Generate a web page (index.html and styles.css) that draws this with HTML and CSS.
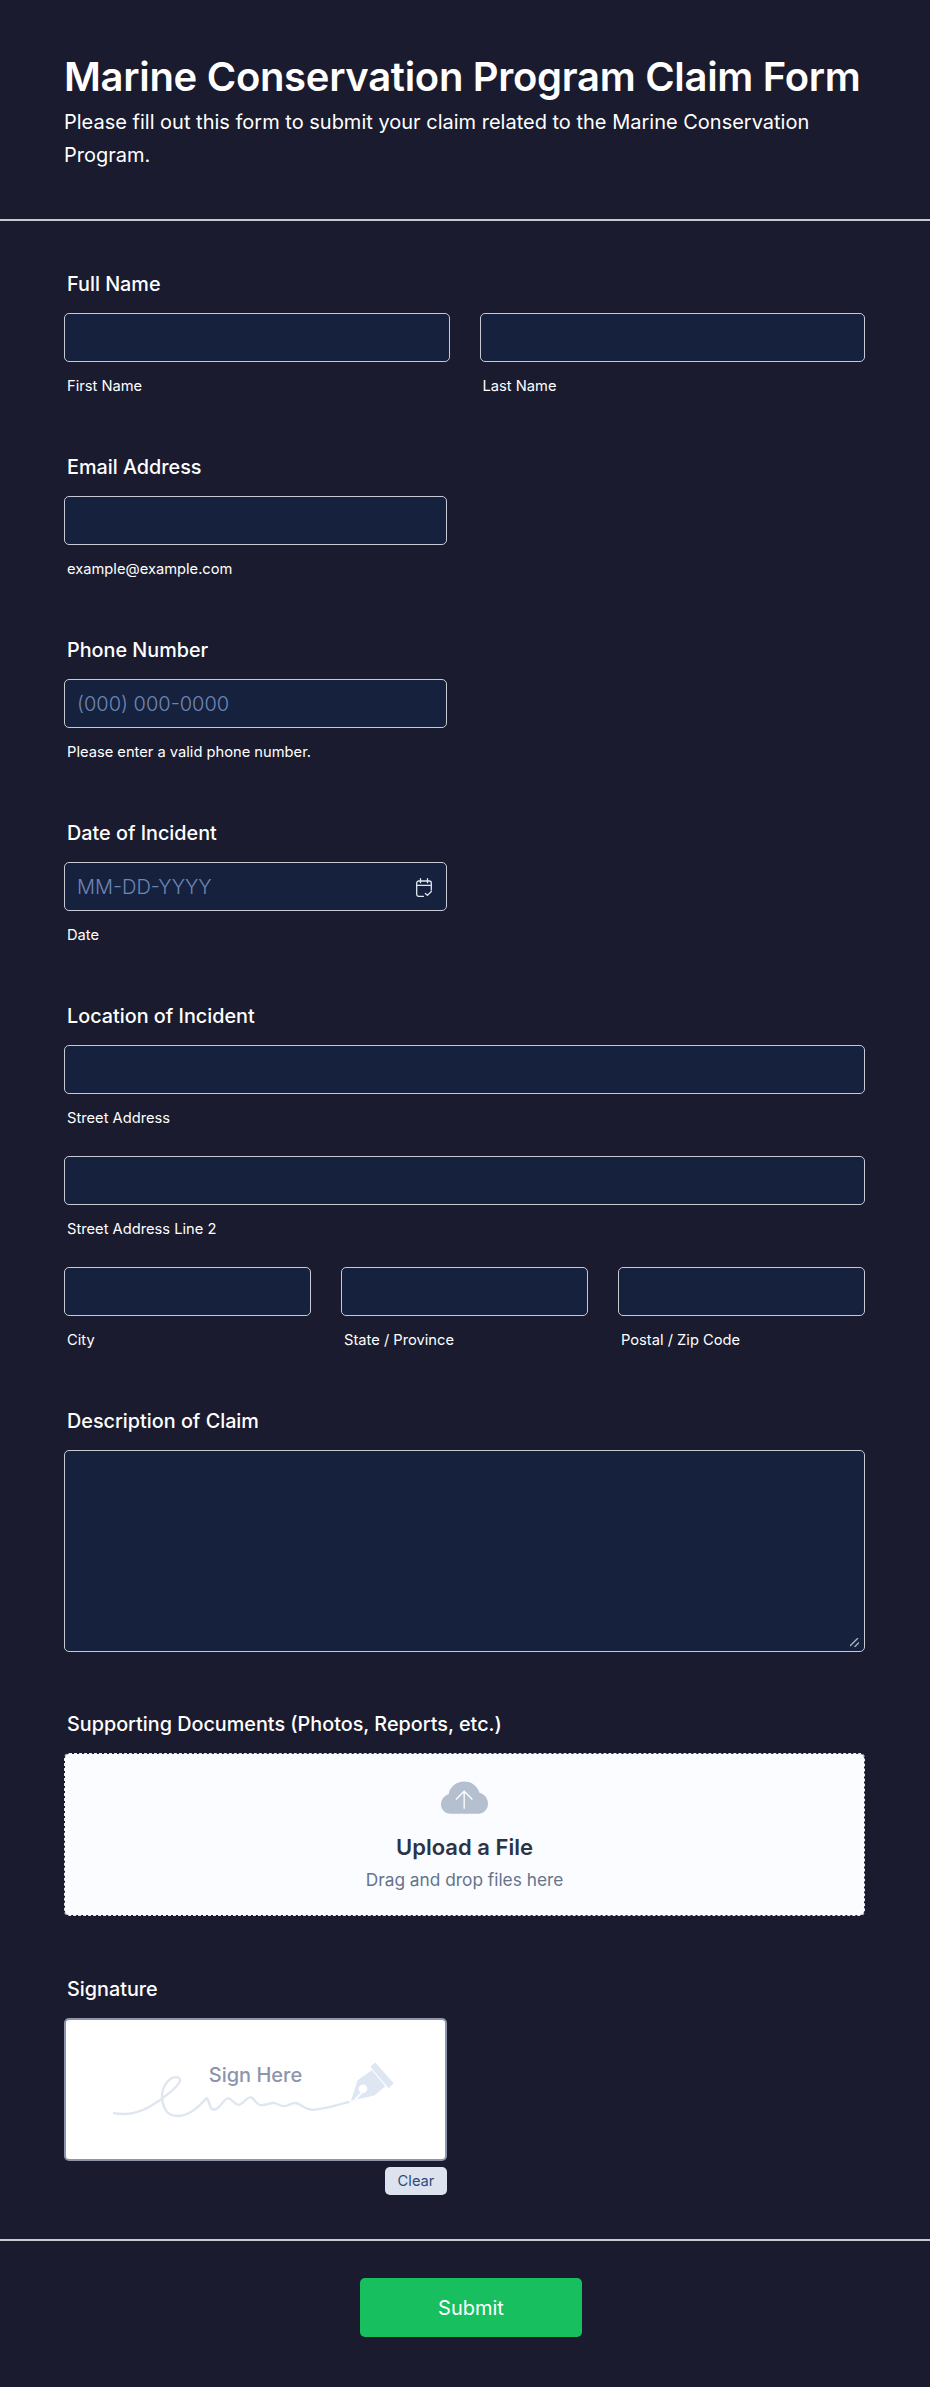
FILE: index.html
```html
<!DOCTYPE html>
<html lang="en">
<head>
    <meta charset="UTF-8">
    <title>Marine Conservation Program Claim Form</title>
    <link rel="stylesheet" href="styles.css">
</head>
<body>
<form class="form">
    <div class="header">
        <h1>Marine Conservation Program Claim Form</h1>
        <p>Please fill out this form to submit your claim related to the Marine Conservation Program.</p>
    </div>

    <div class="fields">
        <div class="field">
            <div class="label">Full Name</div>
            <div class="row two">
                <div><div class="input"></div><div class="sub">First Name</div></div>
                <div><div class="input"></div><div class="sub">Last Name</div></div>
            </div>
        </div>

        <div class="field">
            <div class="label">Email Address</div>
            <div class="half"><div class="input"></div><div class="sub">example@example.com</div></div>
        </div>

        <div class="field">
            <div class="label">Phone Number</div>
            <div class="half"><div class="input hint">(000) 000-0000</div><div class="sub">Please enter a valid phone number.</div></div>
        </div>

        <div class="field">
            <div class="label">Date of Incident</div>
            <div class="half">
                <div class="input hint date">MM-DD-YYYY
                    <svg width="16" height="19" viewBox="0 0 16 19" fill="none" stroke="#e2e8f0" stroke-width="1.300" stroke-linecap="round" stroke-linejoin="round">
                        <path d="M7.500 18.300H2.700a2 2 0 0 1-2-2V5a2 2 0 0 1 2-2h10.600a2 2 0 0 1 2 2v7"/>
                        <path d="M.7 7.300h14.600M4.500.7v4M11.500.7v4"/>
                        <path d="M9.400 15.500l2 1.900 3.900-3.900"/>
                    </svg>
                </div>
                <div class="sub">Date</div>
            </div>
        </div>

        <div class="field">
            <div class="label">Location of Incident</div>
            <div class="input"></div><div class="sub">Street Address</div>
            <div class="line"><div class="input"></div><div class="sub">Street Address Line 2</div></div>
            <div class="row three line">
                <div><div class="input"></div><div class="sub">City</div></div>
                <div><div class="input"></div><div class="sub">State / Province</div></div>
                <div><div class="input"></div><div class="sub">Postal / Zip Code</div></div>
            </div>
        </div>

        <div class="field tall">
            <div class="label">Description of Claim</div>
            <div class="input area">
                <svg width="9" height="9" viewBox="0 0 9 9" stroke="#aab2c0" stroke-width="1.400">
                    <path d="M0 8L8 0M4.500 9L9 4.500"/>
                </svg>
            </div>
        </div>

        <div class="field tall">
            <div class="label">Supporting Documents (Photos, Reports, etc.)</div>
            <div class="upload">
                <svg width="47" height="33" viewBox="305 95 142 98">
                    <path fill="#b4bfcf" d="M335 193C315 193 305 178 305 165 305 150 315 138 328 134 332 112 352 96 375 96 398 96 415 110 421 130 436 133 447 147 447 163 447 180 434 193 418 193Z"/>
                    <path fill="none" stroke="#fff" stroke-width="4" d="M375 178V127M350 150l25-25 25 25"/>
                </svg>
                <div class="up-title">Upload a File</div>
                <div class="up-text">Drag and drop files here</div>
            </div>
        </div>

        <div class="field last">
            <div class="label">Signature</div>
            <div class="half">
                <div class="sign">
                    <svg class="scrawl" width="287" height="67" viewBox="180 160 860 200" fill="none">
                        <path stroke="#dde6f1" stroke-width="7" stroke-linecap="round" stroke-linejoin="round" d="M192 325C230 332 270 322 300 305 340 282 392 240 390 225 386 210 360 216 345 240 330 265 335 300 350 320 365 338 395 338 425 320 445 307 460 290 468 281 474 276 476 300 484 311 492 318 503 312 512 300 520 290 528 278 537 281 548 285 552 298 565 300 578 300 590 275 603 278 612 280 618 300 632 301 648 302 660 292 675 295 690 300 695 308 712 302 722 296 735 292 745 297 760 305 768 315 790 315 830 312 860 300 895 292"/>
                        <path fill="#dde6f1" fill-rule="evenodd" d="M902 288L922 226 965 196 1005 244 972 272ZM945 263A13 13 0 1 0 931 241 13 13 0 0 0 945 263ZM911 284L932 262 936 266 915 288Z"/>
                        <path fill="#dde6f1" d="M960 186L975 173 1030 235 1015 250Z"/>
                    </svg>
                    <div class="sign-text">Sign Here</div>
                </div>
                <div class="clear-row"><span class="clear">Clear</span></div>
            </div>
        </div>
    </div>

    <div class="footer">
        <button type="button" class="submit">Submit</button>
    </div>
</form>
</body>
</html>
```

FILE: styles.css
```css
* {
    margin: 0;
    padding: 0;
    box-sizing: border-box;
}

body {
    background-color: #1a1b2e;
    color: #fff;
    font-family: Inter, "Liberation Sans", sans-serif;
}

.header {
    height: 221px;
    padding: 52px 64px 0;
    border-bottom: 2px solid #c8cad3;
}

.header h1 {
    font-size: 40px;
    line-height: 50px;
    font-weight: 600;
    letter-spacing: -0.3px;
}

.header p {
    font-size: 20px;
    line-height: 33px;
    margin-top: 4px;
}

.fields {
    padding: 49px 65px 0 64px;
}

.field {
    margin-bottom: 56px;
}

.tall {
    margin-bottom: 58px;
}

.last {
    margin-bottom: 44px;
}

.label {
    font-size: 19.8px;
    font-weight: 450;
    line-height: 29px;
    padding: 0 3px;
    margin-bottom: 14px;
}

.row {
    display: grid;
    gap: 30px;
}

.two {
    grid-template-columns: 1fr 1fr;
}

.three {
    grid-template-columns: 1fr 1fr 1fr;
}

.half {
    width: 383px;
}

.line {
    margin-top: 27px;
}

.input {
    height: 49px;
    background-color: #16213e;
    border: 1px solid #c8cad3;
    border-radius: 5px;
}

.hint {
    font-size: 20px;
    line-height: 47px;
    font-weight: 300;
    color: #6f86b5;
    padding: 1px 0 0 12px;
}

.date {
    display: flex;
    justify-content: space-between;
    align-items: center;
    padding-right: 14px;
}

.sub {
    font-size: 14.7px;
    line-height: 22px;
    padding: 0 3px;
    margin-top: 13px;
}

.area {
    height: 202px;
    display: flex;
    justify-content: flex-end;
    align-items: flex-end;
    padding: 4px 5px;
}

.upload {
    height: 163px;
    margin-bottom: 59px;
    background-color: #fbfcff;
    background-clip: padding-box;
    border: 1px dashed #e8e9ee;
    border-radius: 5px;
    text-align: center;
    padding-top: 27px;
}

.upload svg {
    display: block;
    margin: 0 auto;
}

.up-title {
    font-size: 22px;
    line-height: 32px;
    font-weight: 600;
    color: #2c3345;
    margin-top: 17px;
}

.up-text {
    font-size: 17.3px;
    line-height: 26px;
    color: #64748b;
    margin-top: 4px;
}

.sign {
    position: relative;
    height: 143px;
    background-color: #fff;
    border: 2px solid #8d94ab;
    border-radius: 5px;
    text-align: center;
}

.sign-text {
    position: relative;
    font-size: 20px;
    font-weight: 500;
    line-height: 28px;
    color: #8d94ab;
    padding-top: 41px;
}

.scrawl {
    position: absolute;
    left: 44px;
    top: 38px;
}

.clear-row {
    display: flex;
    justify-content: flex-end;
    margin-top: 6px;
}

.clear {
    width: 62px;
    height: 28px;
    font-size: 14.7px;
    line-height: 28px;
    text-align: center;
    color: #2f4a7a;
    background-color: #dce3ef;
    border-radius: 5px;
}

.footer {
    border-top: 2px solid #c8cad3;
    padding: 37px 0 0 12px;
    display: flex;
    justify-content: center;
}

.submit {
    width: 222px;
    height: 59px;
    background-color: #18bf5f;
    color: #fff;
    border: none;
    border-radius: 5px;
    font-family: Inter, "Liberation Sans", sans-serif;
    font-size: 20px;
}
```
